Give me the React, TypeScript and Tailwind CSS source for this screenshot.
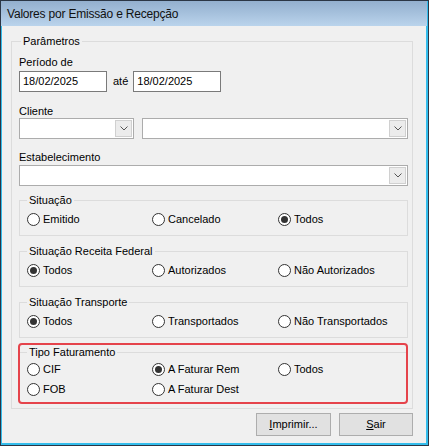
import React from 'react';

function Radio({ label, checked }: { label: string; checked?: boolean }) {
	return (
		<div className="flex items-center h-[13px]">
			<span className="flex items-center justify-center w-[13px] h-[13px] rounded-full border border-[#333333] bg-white shrink-0">
				{checked && <span className="w-[7px] h-[7px] rounded-full bg-[#333333]" />}
			</span>
			<span className="ml-[3px] leading-[13px] whitespace-nowrap">{label}</span>
		</div>
	);
}

function Combo({ width }: { width: string }) {
	return (
		<div className={`flex justify-end h-[21px] p-[1px] border border-[#acacac] bg-white ${width}`}>
			<div className="flex items-center justify-center w-[17px] border border-[#d0d0d0] bg-[#ececec]">
				<svg width="8" height="5" viewBox="0 0 8 5">
					<polyline points="0.5,0.5 4,4 7.5,0.5" fill="none" stroke="#555" strokeWidth="1" />
				</svg>
			</div>
		</div>
	);
}

function Group({ title, items }: { title: string; items: [string, boolean][] }) {
	return (
		<fieldset className="border border-[#dcdcdc] pl-[7px] pr-[4px] pb-[9px]">
			<legend className="px-[2px] leading-[14px]">{title}</legend>
			<div className="grid grid-cols-[125px_126px_1fr] mt-[6px]">
				{items.map(([label, checked]) => (
					<Radio key={label} label={label} checked={checked} />
				))}
			</div>
		</fieldset>
	);
}

export default function App() {
	return (
		<div className="w-[429px] h-[446px] flex flex-col border border-[#2b3645] bg-[#f0f0f0] text-[11px] text-black font-['Liberation_Sans',Arial,sans-serif] overflow-hidden">
			<div className="h-[25px] shrink-0 flex items-center pl-[6px] bg-gradient-to-b from-[#93afce] to-[#bad4ec] border-r border-[#34bdec]">
				<span className="text-[12px] tracking-[-0.2px] text-[#111]">Valores por Emissão e Recepção</span>
			</div>

			<div className="flex-1 flex flex-col border-l border-r-2 border-b-2 border-[#34bdec] pl-[9px] pt-[8px]">
				<fieldset className="w-[402px] border border-[#dcdcdc] pl-[7px] pr-[4px] pb-[4px]">
					<legend className="ml-[2px] px-[2px] leading-[14px]">Parâmetros</legend>

					<div className="mt-[8px] leading-[13px]">Período de</div>
					<div className="flex items-center mt-[2px]">
						<div className="w-[88px] h-[21px] border border-[#7a7a7a] bg-white pl-[3px] leading-[19px]">18/02/2025</div>
						<span className="pl-[6px] pr-[5px]">até</span>
						<div className="w-[88px] h-[21px] border border-[#7a7a7a] bg-white pl-[3px] leading-[19px]">18/02/2025</div>
					</div>

					<div className="mt-[13px] leading-[13px]">Cliente</div>
					<div className="flex gap-[8px]">
						<Combo width="w-[115px]" />
						<Combo width="w-[266px]" />
					</div>

					<div className="mt-[12px] leading-[13px]">Estabelecimento</div>
					<div className="mt-[1px]">
						<Combo width="w-full" />
					</div>

					<div className="mt-[7px]">
						<Group title="Situação" items={[['Emitido', false], ['Cancelado', false], ['Todos', true]]} />
					</div>
					<div className="mt-[8px]">
						<Group
							title="Situação Receita Federal"
							items={[['Todos', true], ['Autorizados', false], ['Não Autorizados', false]]}
						/>
					</div>
					<div className="mt-[8px]">
						<Group
							title="Situação Transporte"
							items={[['Todos', true], ['Transportados', false], ['Não Transportados', false]]}
						/>
					</div>

					<div className="mt-[5px] -ml-[1px] w-[390px] h-[61px] border-2 border-[#e5434b] rounded-[4px]">
						<fieldset className="border-t border-[#dcdcdc] pl-[7px]">
							<legend className="px-[2px] leading-[14px]">Tipo Faturamento</legend>
							<div className="grid grid-cols-[125px_126px_1fr] gap-y-[7px] mt-[4px]">
								<Radio label="CIF" />
								<Radio label="A Faturar Rem" checked />
								<Radio label="Todos" />
								<Radio label="FOB" />
								<Radio label="A Faturar Dest" />
							</div>
						</fieldset>
					</div>
				</fieldset>

				<div className="flex justify-end gap-[8px] w-[402px] mt-[4px]">
					<button className="w-[75px] h-[23px] border border-[#adadad] bg-[#e1e1e1]">
						<span className="underline">I</span>mprimir...
					</button>
					<button className="w-[74px] h-[23px] border border-[#adadad] bg-[#e1e1e1]">
						<span className="underline">S</span>air
					</button>
				</div>
			</div>
		</div>
	);
}
